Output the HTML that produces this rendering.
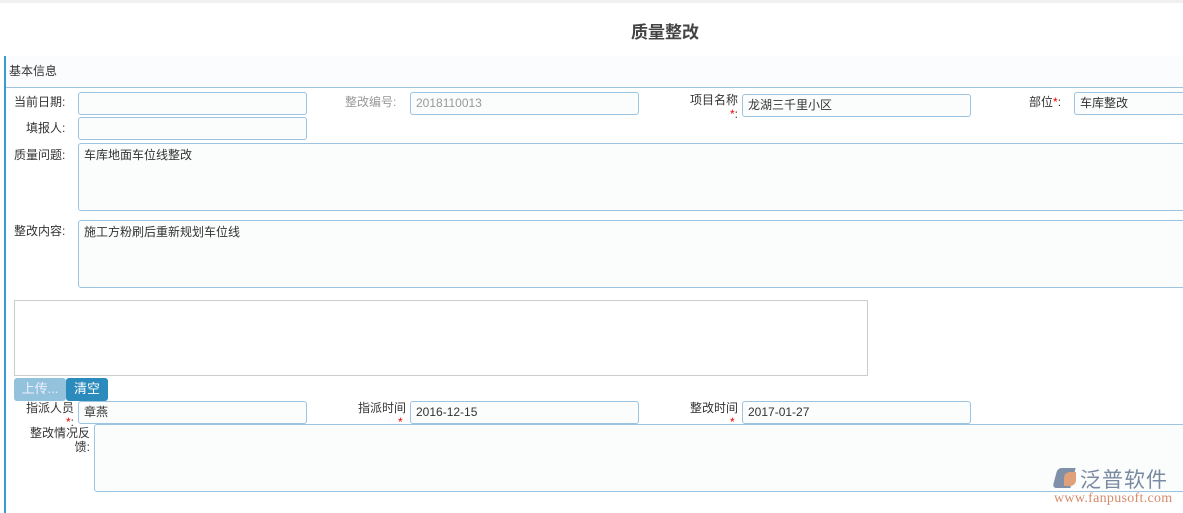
<!DOCTYPE html><html><head><meta charset="utf-8"><style>
body{margin:0;width:1183px;height:513px;background:#fff;font-family:"Liberation Sans","Noto Sans CJK SC",sans-serif;font-size:12px;color:#333;position:relative;overflow:hidden}
.a{position:absolute}
.in{position:absolute;border:1px solid #9cc3e0;border-radius:3px;background:#fbfcfc;box-sizing:border-box;padding:0 5px;font-size:12px;line-height:20px}
.ta{position:absolute;border:1px solid #9cc3e0;border-radius:3px;background:#fbfcfc;box-sizing:border-box;padding:2px 5px}
.l{position:absolute;text-align:right;white-space:nowrap}
.s{color:#e00}
</style></head><body>
<div class="a" style="left:0;top:0;width:1183px;height:3px;background:#f0f0f0"></div>
<div class="a" style="left:0;top:18px;width:1330px;text-align:center;font-size:17px;font-weight:bold;color:#444">质量整改</div>
<div class="a" style="left:4px;top:56px;width:2px;height:457px;background:#3a9ad6"></div>
<div class="a" style="left:6px;top:56px;width:1177px;height:31px;background:#fafcfd;border-bottom:1px solid #9cc3e0"></div>
<div class="a" style="left:9px;top:62px;font-size:12px">基本信息</div>
<div class="l" style="left:14px;top:93px">当前日期:</div>
<div class="in" style="left:78px;top:92px;width:229px;height:23px"></div>
<div class="l" style="left:345px;top:93px;color:#999">整改编号:</div>
<div class="in" style="left:410px;top:92px;width:229px;height:23px;color:#999">2018110013</div>
<div class="l" style="left:690px;top:93px;line-height:14px">项目名称<br><span class="s" style="margin-left:30px">*</span>:</div>
<div class="in" style="left:742px;top:94px;width:229px;height:23px">龙湖三千里小区</div>
<div class="l" style="left:1029px;top:93px">部位<span class="s">*</span>:</div>
<div class="in" style="left:1074px;top:92px;width:120px;height:23px">车库整改</div>
<div class="l" style="left:26px;top:119px">填报人:</div>
<div class="in" style="left:78px;top:117px;width:229px;height:23px"></div>
<div class="l" style="left:14px;top:146px">质量问题:</div>
<div class="ta" style="left:78px;top:143px;width:1120px;height:68px">车库地面车位线整改</div>
<div class="l" style="left:14px;top:222px">整改内容:</div>
<div class="ta" style="left:78px;top:220px;width:1120px;height:68px">施工方粉刷后重新规划车位线</div>
<div class="a" style="left:14px;top:300px;width:854px;height:76px;border:1px solid #ccc;box-sizing:border-box"></div>
<div class="a" style="left:14px;top:378px;width:52px;height:23px;background:#93c3dc;color:#eef;border-radius:3px;text-align:center;line-height:22px;font-size:13px">上传...</div>
<div class="a" style="left:66px;top:378px;width:42px;height:23px;background:#2b8bbd;color:#fff;border-radius:3px;text-align:center;line-height:22px;font-size:13px">清空</div>
<div class="l" style="left:26px;top:401px;line-height:14px">指派人员<br><span class="s" style="margin-left:30px">*</span>:</div>
<div class="in" style="left:78px;top:401px;width:229px;height:23px">章燕</div>
<div class="l" style="left:358px;top:401px;line-height:14px">指派时间<br><span class="s" style="margin-left:30px">*</span>.</div>
<div class="in" style="left:410px;top:401px;width:229px;height:23px">2016-12-15</div>
<div class="l" style="left:690px;top:401px;line-height:14px">整改时间<br><span class="s" style="margin-left:30px">*</span>.</div>
<div class="in" style="left:742px;top:401px;width:229px;height:23px">2017-01-27</div>
<div class="l" style="left:30px;top:426px;line-height:14px">整改情况反<br>馈:</div>
<div class="ta" style="left:94px;top:424px;width:1100px;height:68px"></div>
<div class="a" style="left:1055px;top:468px;width:18px;height:20px;background:#8090a8;border-radius:4px 0 0 4px;transform:skewX(-15deg)"></div>
<div class="a" style="left:1064px;top:472px;width:12px;height:14px;background:#e0a07a;border-radius:6px 0 6px 0"></div>
<div class="a" style="left:1080px;top:464px;font-size:21px;color:#7a8aa0;letter-spacing:1px">泛普软件</div>
<div class="a" style="left:1054px;top:491px;font-size:14px;color:#d68a6a;font-family:'Liberation Serif',serif;letter-spacing:0.3px">www.fanpusoft.com</div>
</body></html>
